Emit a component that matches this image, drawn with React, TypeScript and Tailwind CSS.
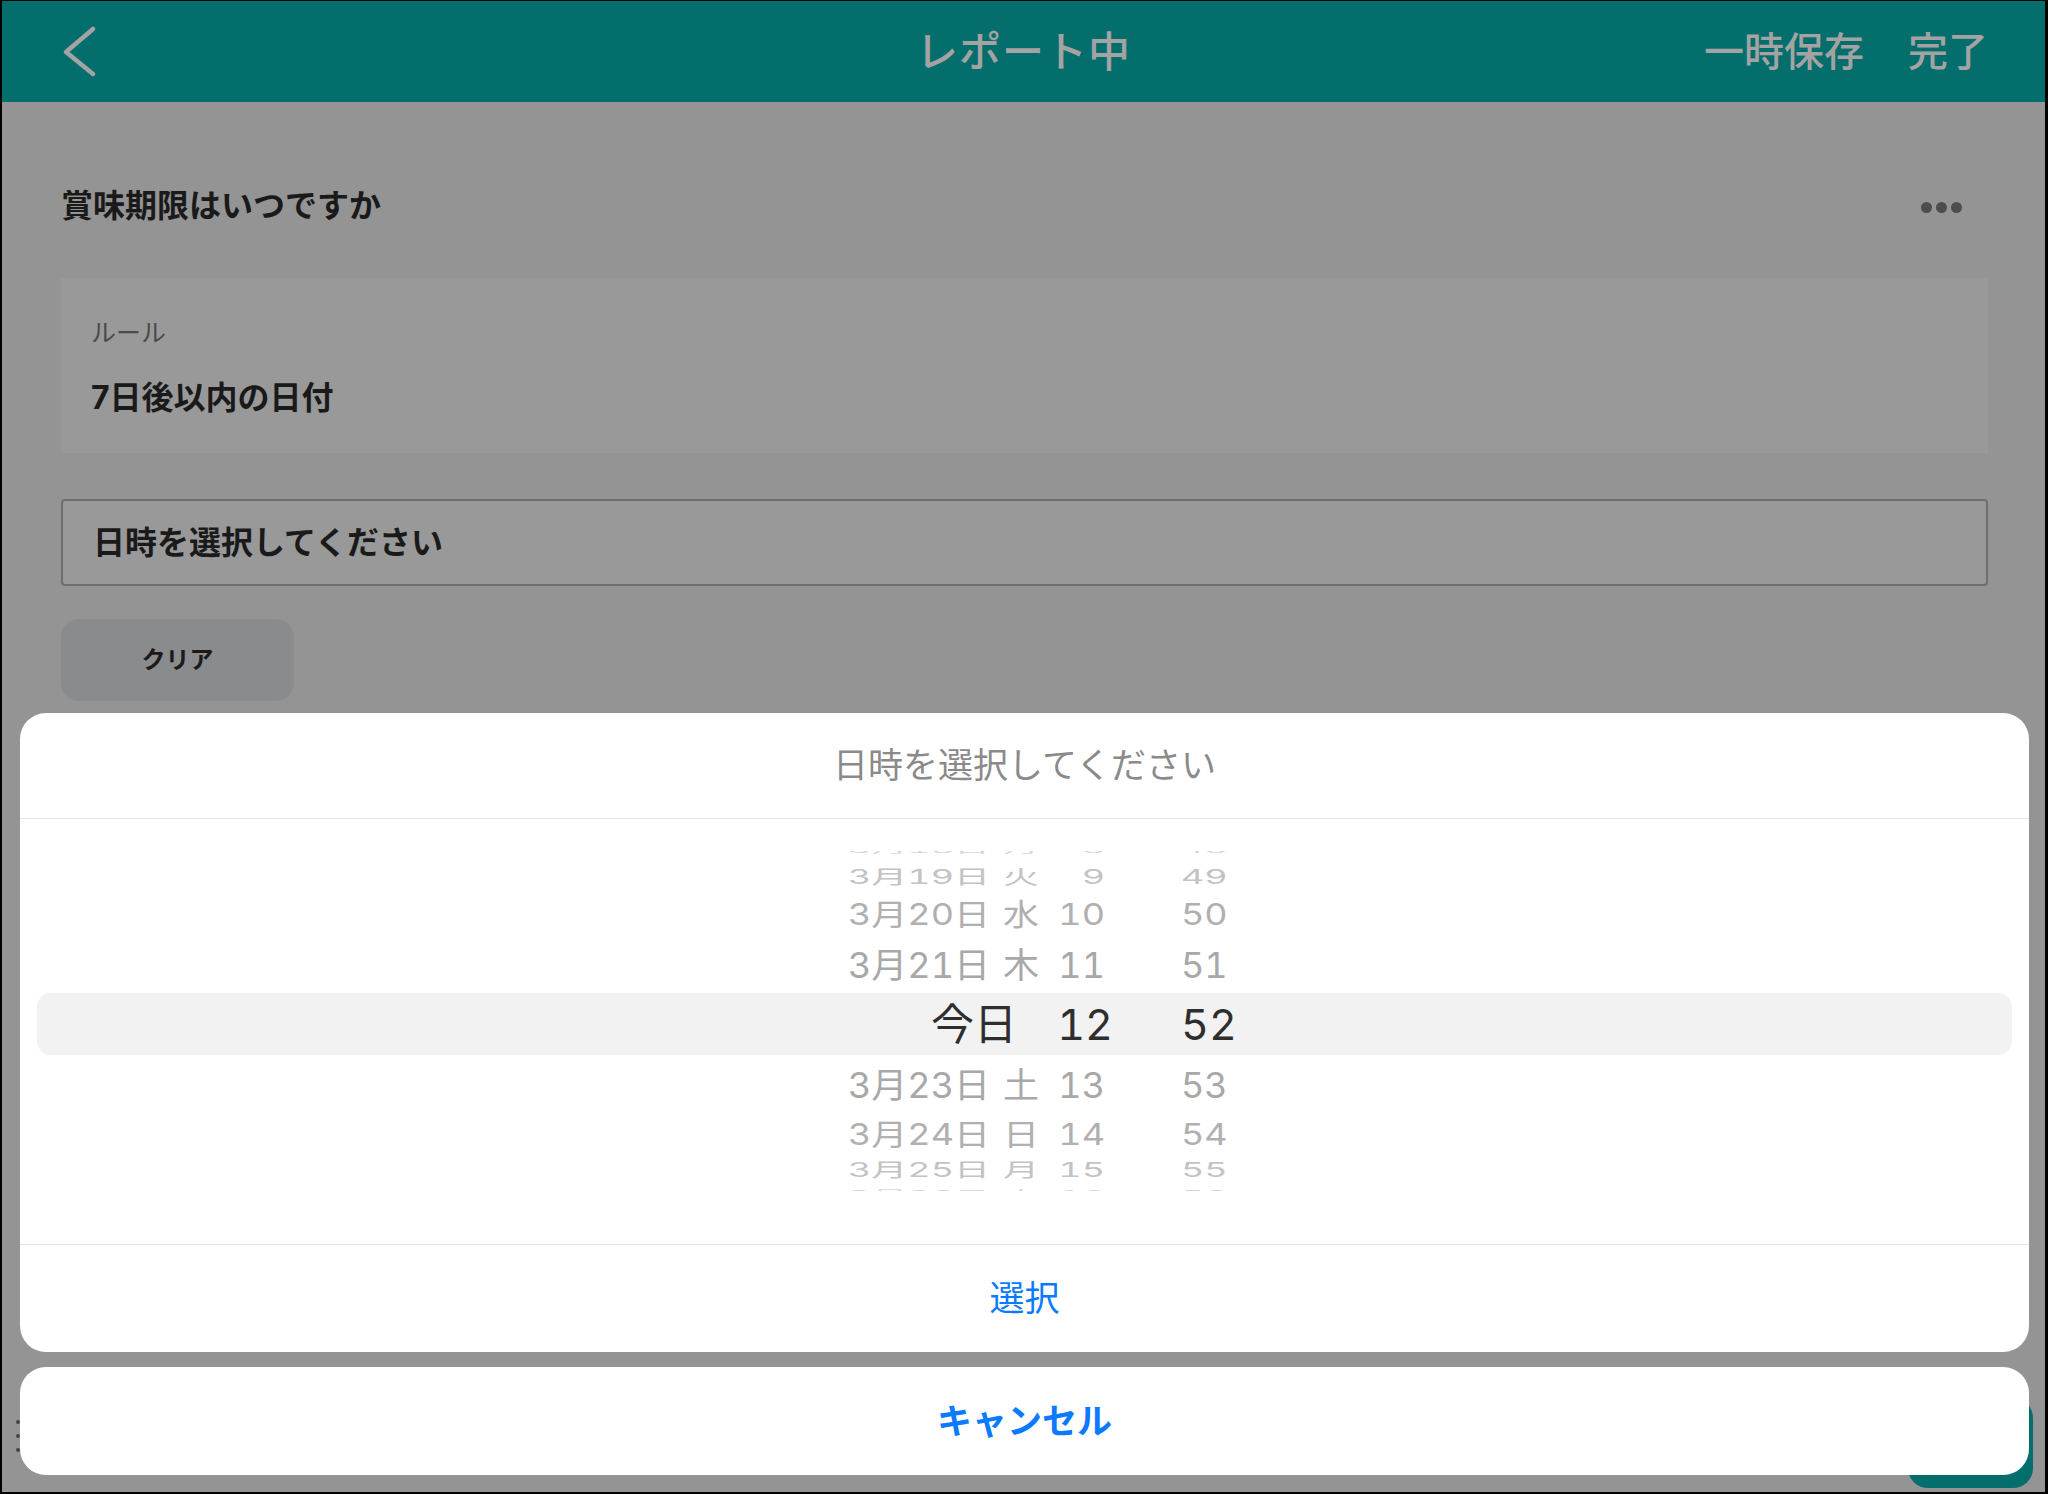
import React from "react";

type WheelRow = {
  date: string;
  wd: string;
  h: string;
  m: string;
  rowCls: string;
  txtCls: string;
};

const rowsTop: WheelRow[] = [
  { date: "3月18日", wd: "月", h: "8", m: "48", rowCls: "h-[28px] -mt-[16px]", txtCls: "scale-y-[0.3] text-[#d6d6d6]" },
  { date: "3月19日", wd: "火", h: "9", m: "49", rowCls: "h-[28px]", txtCls: "scale-y-[0.55] text-[#c3c3c3]" },
  { date: "3月20日", wd: "水", h: "10", m: "50", rowCls: "h-[46px]", txtCls: "scale-y-[0.82] text-[#b0b0b0]" },
  { date: "3月21日", wd: "木", h: "11", m: "51", rowCls: "h-[56px]", txtCls: "scale-y-[0.97] text-[#a8a8a8]" },
];

const rowsBottom: WheelRow[] = [
  { date: "3月23日", wd: "土", h: "13", m: "53", rowCls: "h-[60px]", txtCls: "scale-y-[0.97] text-[#a8a8a8]" },
  { date: "3月24日", wd: "日", h: "14", m: "54", rowCls: "h-[38px]", txtCls: "scale-y-[0.82] text-[#b0b0b0]" },
  { date: "3月25日", wd: "月", h: "15", m: "55", rowCls: "h-[34px]", txtCls: "scale-y-[0.55] text-[#c3c3c3]" },
  { date: "3月26日", wd: "火", h: "16", m: "56", rowCls: "h-[14px]", txtCls: "scale-y-[0.3] text-[#d6d6d6]" },
];

function Row({ r }: { r: WheelRow }) {
  return (
    <div className={`shrink-0 flex items-center pl-[779px] ${r.rowCls}`}>
      <div className={`flex items-center text-[36px] leading-none tabular-nums ${r.txtCls}`}>
        <div className="w-[240px] text-right whitespace-nowrap">
          {r.date}
          <span className="ml-[13px]">{r.wd}</span>
        </div>
        <div className="w-[66px] text-right">{r.h}</div>
        <div className="w-[80px] ml-[76px] text-left">{r.m}</div>
      </div>
    </div>
  );
}

export default function App() {
  return (
    <div className="w-[2048px] h-[1494px] bg-black pt-[1px] pl-[2px] pr-[3px] pb-[2px] font-['Inter','Noto_Sans_CJK_JP',sans-serif]">
      <div className="relative h-full bg-[#949494] overflow-hidden flex flex-col">
        {/* Header */}
        <header className="h-[101px] shrink-0 bg-[#046e6c] grid grid-cols-[1fr_auto_1fr] items-center">
          <div className="pl-[58px] flex items-center">
            <svg width="40" height="56" viewBox="0 0 40 56" fill="none">
              <polyline
                points="33,5 6,28 33,50"
                stroke="#a3a3a3"
                strokeWidth="4.5"
                strokeLinecap="round"
                strokeLinejoin="round"
              />
            </svg>
          </div>
          <div className="text-[42px] font-medium text-[#a3a3a3] leading-none tracking-[1px]">レポート中</div>
          <div className="flex justify-end items-center gap-[44px] pr-[57px] text-[40px] font-medium text-[#a3a3a3] leading-none">
            <span>一時保存</span>
            <span>完了</span>
          </div>
        </header>

        {/* Page content */}
        <main className="flex flex-col pl-[59px] pr-[57px]">
          <div className="mt-[74px] h-[60px] flex items-center justify-between">
            <span className="text-[32px] font-bold text-[#1a1a1a]">賞味期限はいつですか</span>
            <div className="flex items-center gap-[4px] mr-[26px] mt-[3px]">
              <span className="w-[11px] h-[11px] rounded-full bg-[#4d4d4d]" />
              <span className="w-[11px] h-[11px] rounded-full bg-[#4d4d4d]" />
              <span className="w-[11px] h-[11px] rounded-full bg-[#4d4d4d]" />
            </div>
          </div>

          <div className="mt-[42px] h-[175px] bg-[#999999] flex flex-col pl-[30px] pt-[40px]">
            <span className="text-[25px] leading-[30px] text-[#4a4a4a]">ルール</span>
            <span className="mt-[30px] text-[32px] leading-[40px] font-bold text-[#1a1a1a]">7日後以内の日付</span>
          </div>

          <div className="mt-[46px] h-[87px] bg-[#999999] border-2 border-[#6c6f72] rounded-[4px] flex items-center pl-[30px]">
            <span className="text-[32px] font-bold text-[#1a1a1a]">日時を選択してください</span>
          </div>

          <div className="mt-[33px] w-[233px] h-[82px] rounded-[18px] bg-[#8a8b8d] flex items-center justify-center">
            <span className="text-[24px] font-bold text-[#1a1a1a]">クリア</span>
          </div>
        </main>

        {/* partially hidden elements behind the sheet */}
        <div className="absolute left-[14px] bottom-[40px] flex flex-col gap-[10px]">
          <span className="w-[4px] h-[4px] rounded-full bg-[#444]" />
          <span className="w-[4px] h-[4px] rounded-full bg-[#444]" />
          <span className="w-[4px] h-[4px] rounded-full bg-[#444]" />
        </div>
        <div className="absolute right-[12px] bottom-[4px] w-[125px] h-[90px] rounded-[20px] bg-[#046e6c]" />

        {/* Action sheet */}
        <div className="absolute left-[18px] right-[16px] bottom-[17px] flex flex-col gap-[15px]">
          <div className="bg-white rounded-[26px] overflow-hidden flex flex-col">
            <div className="h-[106px] shrink-0 flex items-center justify-center border-b border-[#e3e6ea]">
              <span className="text-[35px] text-[#8a8a8a]">日時を選択してください</span>
            </div>
            <div className="h-[425px] shrink-0 pt-[32px]">
              <div className="h-[340px] overflow-hidden flex flex-col">
                {rowsTop.map((r) => (
                  <Row key={r.date} r={r} />
                ))}
                <div className="shrink-0 h-[62px] mx-[17px] rounded-[14px] bg-[#f2f2f2] flex items-center pl-[762px]">
                  <div className="flex items-center text-[43px] leading-none text-[#2e2e2e] tabular-nums">
                    <div className="w-[240px] pr-[22px] text-right">今日</div>
                    <div className="w-[74px] text-right">12</div>
                    <div className="w-[80px] ml-[68px] text-left">52</div>
                  </div>
                </div>
                {rowsBottom.map((r) => (
                  <Row key={r.date} r={r} />
                ))}
              </div>
            </div>
            <div className="h-[108px] shrink-0 border-t border-[#e3e3e3] flex items-center justify-center">
              <span className="text-[35px] text-[#0a7aff]">選択</span>
            </div>
          </div>
          <div className="h-[108px] bg-white rounded-[26px] flex items-center justify-center">
            <span className="text-[35px] font-bold text-[#0a7aff]">キャンセル</span>
          </div>
        </div>
      </div>
    </div>
  );
}
